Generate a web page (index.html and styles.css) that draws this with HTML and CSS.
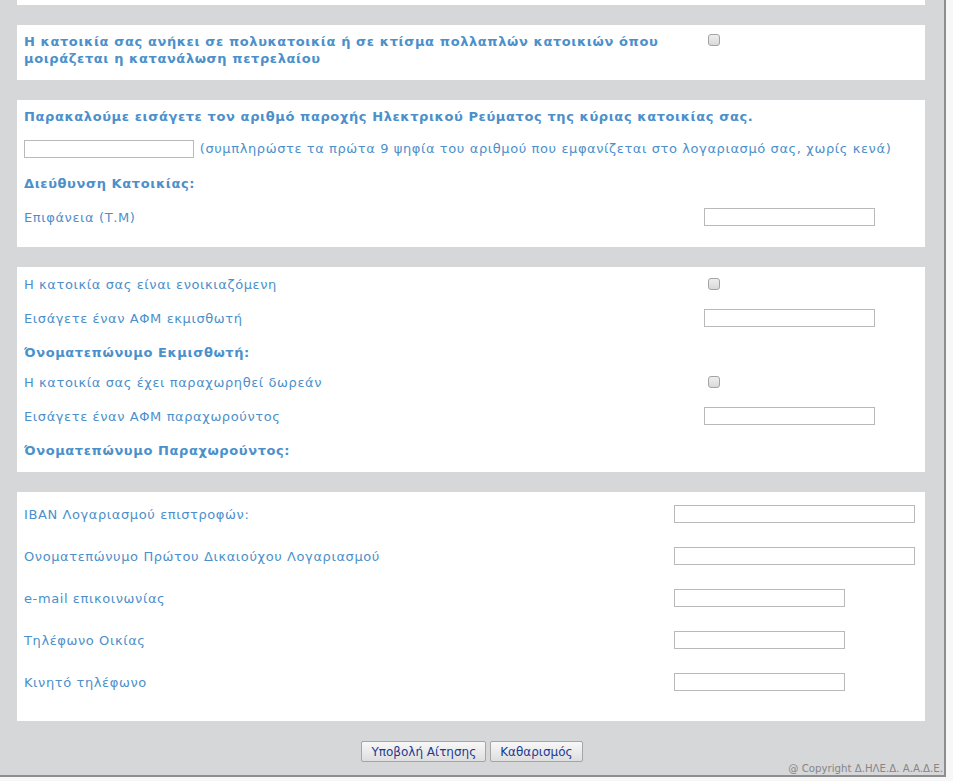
FILE: index.html
```html
<!DOCTYPE html>
<html lang="el">
<head>
  <meta charset="UTF-8">
  <title>Αίτηση επιδόματος θέρμανσης</title>
  <link rel="stylesheet" href="styles.css">
</head>
<body>

  <div class="page">

    <div class="panel stub"></div>

    <div class="panel p-shared">
      <div class="row row-top">
        <span class="label strong">Η κατοικία σας ανήκει σε πολυκατοικία ή σε κτίσμα πολλαπλών κατοικιών όπου μοιράζεται η κατανάλωση πετρελαίου</span>
        <span class="ctl"><input type="checkbox" class="chk"></span>
      </div>
    </div>

    <div class="panel p-power">
      <div class="row row-head">
        <span class="label strong">Παρακαλούμε εισάγετε τον αριθμό παροχής Ηλεκτρικού Ρεύματος της κύριας κατοικίας σας.</span>
      </div>
      <div class="row row-full">
        <span class="label"><input type="text" class="txt txt-md"> (συμπληρώστε τα πρώτα 9 ψηφία του αριθμού που εμφανίζεται στο λογαριασμό σας, χωρίς κενά)</span>
      </div>
      <div class="row">
        <span class="label strong">Διεύθυνση Κατοικίας:</span>
      </div>
      <div class="row">
        <span class="label">Επιφάνεια (Τ.Μ)</span>
        <span class="ctl"><input type="text" class="txt"></span>
      </div>
    </div>

    <div class="panel p-rent">
      <div class="row">
        <span class="label">Η κατοικία σας είναι ενοικιαζόμενη</span>
        <span class="ctl"><input type="checkbox" class="chk"></span>
      </div>
      <div class="row">
        <span class="label">Εισάγετε έναν ΑΦΜ εκμισθωτή</span>
        <span class="ctl"><input type="text" class="txt"></span>
      </div>
      <div class="row row-name">
        <span class="label strong">Όνοματεπώνυμο Εκμισθωτή:</span>
      </div>
      <div class="row">
        <span class="label">Η κατοικία σας έχει παραχωρηθεί δωρεάν</span>
        <span class="ctl"><input type="checkbox" class="chk"></span>
      </div>
      <div class="row">
        <span class="label">Εισάγετε έναν ΑΦΜ παραχωρούντος</span>
        <span class="ctl"><input type="text" class="txt"></span>
      </div>
      <div class="row row-name">
        <span class="label strong">Όνοματεπώνυμο Παραχωρούντος:</span>
      </div>
    </div>

    <div class="panel p-bank">
      <div class="row row-wide">
        <span class="label">IBAN Λογαριασμού επιστροφών:</span>
        <span class="ctl"><input type="text" class="txt txt-lg"></span>
      </div>
      <div class="row row-wide">
        <span class="label">Ονοματεπώνυμο Πρώτου Δικαιούχου Λογαριασμού</span>
        <span class="ctl"><input type="text" class="txt txt-lg"></span>
      </div>
      <div class="row row-wide">
        <span class="label">e-mail επικοινωνίας</span>
        <span class="ctl"><input type="text" class="txt"></span>
      </div>
      <div class="row row-wide">
        <span class="label">Τηλέφωνο Οικίας</span>
        <span class="ctl"><input type="text" class="txt"></span>
      </div>
      <div class="row row-wide">
        <span class="label">Κινητό τηλέφωνο</span>
        <span class="ctl"><input type="text" class="txt"></span>
      </div>
    </div>

    <div class="actions">
      <button type="submit">Υποβολή Αίτησης</button>
      <button type="reset">Καθαρισμός</button>
    </div>

    <div class="copy">@ Copyright Δ.ΗΛΕ.Δ. Α.Α.Δ.Ε.</div>

  </div>

</body>
</html>
```

FILE: styles.css
```css
html, body {
  margin: 0;
  padding: 0;
  background: #f7f7f7;
  font-family: "DejaVu Sans", Verdana, sans-serif;
  font-size: 13px;
  color: #4b90cb;
}

.page {
  width: 946px;
  height: 777px;
  box-sizing: border-box;
  background: #d6d7d9;
  border-right: 2px solid #8e8e8e;
  border-bottom: 2px solid #8e8e8e;
  overflow: hidden;
}

.panel {
  margin: 0 19px 20px 17px;
  padding: 0 7px;
  background: #fff;
}

.stub      { height: 5px; }
.p-shared  { height: 55px; padding-top: 8px; box-sizing: border-box; }
.p-power   { padding-bottom: 13px; }
.p-rent    { padding-bottom: 9px; }
.p-bank    { padding-top: 1px; padding-bottom: 18px; margin-bottom: 20px; }

.row {
  display: grid;
  grid-template-columns: 680px 1fr;
  align-items: center;
  height: 34px;
  line-height: 17px;
}

.row-top  { align-items: start; height: auto; }
.row-top .label { padding-right: 20px; }
.row-head { height: 32px; grid-template-columns: 1fr; }
.row-full { grid-template-columns: 1fr; }
.row-name { height: 30px; align-items: end; padding-bottom: 4px; box-sizing: border-box; }
.row-wide { grid-template-columns: 650px 1fr; height: 42px; }

.label { letter-spacing: 0.6px; }
.strong { font-weight: bold; letter-spacing: 0.6px; }

.ctl { display: flex; align-items: center; }

.txt {
  width: 171px;
  height: 18px;
  box-sizing: border-box;
  margin: 0 1px 0 0;
  padding: 1px 3px;
  border: 1px solid #b9b9b9;
  background: #fff;
  vertical-align: middle;
}

.txt-md { width: 170px; }
.txt-lg { width: 241px; }

.chk {
  appearance: none;
  -webkit-appearance: none;
  width: 12px;
  height: 12px;
  margin: 0 0 0 4px;
  border: 1px solid #a3a3a3;
  border-radius: 3px;
  background: linear-gradient(#eeeeee, #d9d9d9);
}

.row-top .chk { margin-top: 1px; }

.actions {
  text-align: center;
  font-size: 0;
}

button {
  height: 21px;
  margin: 0 2px;
  padding: 0 9px;
  font-family: "DejaVu Sans", Tahoma, sans-serif;
  font-size: 12px;
  color: #1f3a94;
  background: linear-gradient(#f8f8f8, #dedede);
  border: 1px solid #a5a5a5;
  border-radius: 2px;
}

.copy {
  text-align: right;
  font-size: 10.2px;
  color: #868686;
  margin-top: 1px;
  padding-right: 1px;
}
```
